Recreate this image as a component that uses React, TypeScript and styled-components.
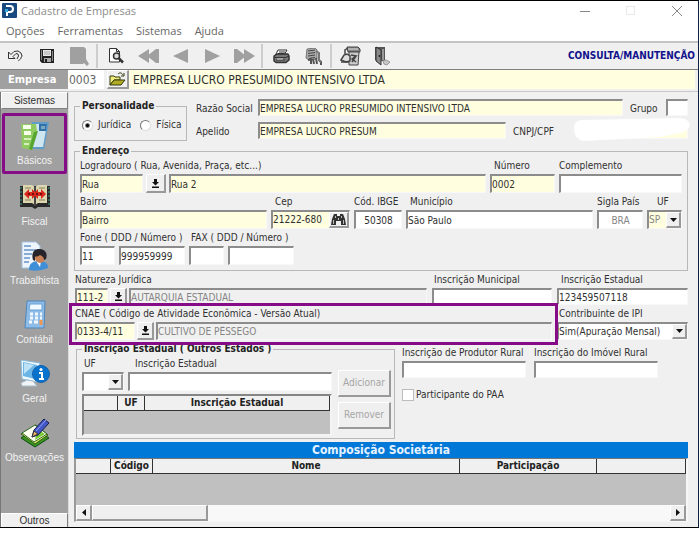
import React, { useId } from "react";
import styled, { createGlobalStyle, css } from "styled-components";

const ui = '"DejaVu Sans Condensed", "DejaVu Sans", sans-serif';
const purple = "#850c86";

const GlobalStyle = createGlobalStyle`
  * { box-sizing: border-box; }
  body { margin: 0; background: #fff; }
  body, input, button, select {
    font-family: ${ui};
    font-size: 10px;
    line-height: 14px;
    color: #303030;
  }
  button { padding: 0; margin: 0; cursor: pointer; }
`;

const Window = styled.div`
  display: flex;
  flex-direction: column;
  background: #f0f0f0;
  border-top: 1px solid #000;
  border-right: 1px solid #0c2340;
  border-bottom: 1px solid #000;
`;

const TitleBar = styled.header`
  display: flex;
  align-items: center;
  gap: 4px;
  height: 19px;
  padding-left: 2px;
  background: #fff;
`;

const Title = styled.h1`
  flex: 1;
  margin: 0;
  font-family: "Open Sans", sans-serif;
  font-size: 11px;
  font-weight: 400;
  color: #8c8c8c;
`;

const WindowButton = styled.button`
  display: grid;
  place-items: center;
  width: 42px;
  height: 18px;
  border: 0;
  background: none;
`;

const MenuBar = styled.nav`
  display: flex;
  gap: 13px;
  height: 21px;
  padding: 4px 6px 0;
  background: #fff;
`;

const MenuLink = styled.a`
  font-family: "Open Sans", sans-serif;
  font-size: 11px;
  color: #666;
  text-decoration: none;
`;

const ToolBar = styled.div`
  display: flex;
  align-items: center;
  gap: 2px;
  height: 29px;
  padding-right: 3px;
  border-top: 2px solid #c4c4c4;
  border-bottom: 1px solid #808080;
`;

const ToolButton = styled.button`
  display: grid;
  place-items: center;
  width: 30px;
  height: 24px;
  border: 0;
  background: none;
`;

const Separator = styled.span`
  width: 2px;
  height: 24px;
  margin-right: 1px;
  background: #cdcdcd;
`;

const Mode = styled.strong`
  margin-left: auto;
  color: #12128c;
`;

const CompanyRow = styled.div`
  display: flex;
  align-items: stretch;
  height: 19px;
  padding-right: 3px;
  margin-bottom: 2px;
`;

const CompanyLabel = styled.label`
  width: 68px;
  padding-left: 8px;
  background: #a0a0a0;
  color: #fff;
  font-size: 11px;
  font-weight: 700;
  line-height: 19px;
`;

const CompanyInput = styled.input<{ $wide?: boolean }>`
  width: 36px;
  margin-right: 3px;
  padding: 0 1px;
  border: 0;
  background: #fff;
  font-size: 12px;
  color: #666;
  ${(p) =>
    p.$wide &&
    css`
      flex: 1;
      margin: 0;
      padding: 0 4px;
      background: #ffffdf;
      color: #303030;
    `}
`;

const Body = styled.div`
  display: flex;
  border-top: 1px solid #c8c8c8;
`;

const SideBar = styled.aside`
  display: flex;
  flex-direction: column;
  width: 69px;
  flex: none;
  background: #a0a0a0;
  border-left: 1px solid #777;
  border-right: 1px solid #ddd;
`;

const SideTab = styled.button<{ $end?: boolean }>`
  height: 17px;
  border: 1px solid;
  border-color: #fff #808080 #808080 #fff;
  background: #f0f0f0;
  font-family: "Liberation Sans", sans-serif;
  font-size: 10px;
  ${(p) =>
    p.$end &&
    css`
      height: 14px;
      margin-top: auto;
      border-bottom: 0;
    `}
`;

const SideItem = styled.button<{ $active?: boolean }>`
  display: flex;
  flex-direction: column;
  align-items: center;
  gap: 3px;
  height: 59px;
  border: 3px solid transparent;
  background: none;
  padding-top: 5px;
  font-family: "Liberation Sans", sans-serif;
  font-size: 10px;
  line-height: 14px;
  color: #f3f3f3;
  white-space: nowrap;
  ${(p) =>
    p.$active &&
    css`
      height: 61px;
      margin: 4px 1px 0;
      border: 3px solid ${purple};
      border-radius: 2px;
    `}
`;

const Content = styled.main`
  display: flex;
  flex-direction: column;
  flex: 1;
  min-width: 0;
  padding: 7px 10px 5px 5px;
`;

const Row = styled.div<{ $gap?: number }>`
  display: flex;
  align-items: flex-end;
  gap: ${(p) => p.$gap ?? 4}px;
`;

const TopRow = styled.div`
  display: flex;
  gap: 9px;
  margin-bottom: 3px;
`;

const TopFields = styled.div`
  display: flex;
  flex-direction: column;
  gap: 6px;
  flex: 1;
`;

const InlineRow = styled.div`
  display: flex;
  align-items: center;
`;

const InlineLabel = styled.label<{ $w: number; $indent?: number }>`
  width: ${(p) => p.$w}px;
  padding-left: ${(p) => p.$indent ?? 0}px;
  padding-top: 3px;
  height: 17px;
`;

const Group = styled.fieldset<{ $w?: number; $bottom?: number }>`
  min-width: 0;
  width: ${(p) => (p.$w ? `${p.$w}px` : "auto")};
  margin: 0;
  padding: 1px 5px ${(p) => p.$bottom ?? 5}px;
  border: 1px solid #b8b8b8;
  > legend {
    padding: 0 2px;
    font-weight: 700;
    line-height: 14px;
    color: #222;
  }
`;

const Stack = styled.div`
  display: flex;
  flex-direction: column;
  gap: 2px;
`;

const FieldBox = styled.div<{ $w?: number }>`
  display: flex;
  flex-direction: column;
  gap: 1px;
  min-width: 0;
  ${(p) => (p.$w ? `width: ${p.$w}px; flex: none;` : "flex: 1;")}
`;

const FieldLabel = styled.label<{ $indent?: number }>`
  padding-left: ${(p) => p.$indent ?? 0}px;
  white-space: nowrap;
`;

type Tone = "white" | "yellow" | "gray";
const fills: Record<Tone, string> = { white: "#fff", yellow: "#ffffdf", gray: "#f0f0f0" };

const sunken = css`
  border: solid;
  border-width: 2px 1px 1px 2px;
  border-color: #8c8c8c #f8f8f8 #f8f8f8 #8c8c8c;
`;

const raised = css`
  border: solid;
  border-width: 1px 2px 2px 1px;
  border-color: #fff #999 #999 #fff;
  background: #efefef;
`;

const TextInput = styled.input<{ $w?: number; $h?: number; $tone?: Tone; $muted?: boolean; $center?: boolean }>`
  ${sunken}
  ${(p) => (p.$w ? `width: ${p.$w}px; flex: none;` : "width: 100%; flex: 1 1 0;")}
  min-width: 0;
  height: ${(p) => p.$h ?? 19}px;
  padding: 0;
  border-radius: 0;
  background: ${(p) => fills[p.$tone ?? "white"]};
  color: ${(p) => (p.$muted ? "#858585" : "#303030")};
  text-align: ${(p) => (p.$center ? "center" : "left")};
  outline: none;
`;

const ColumnInput = styled(TextInput)`
  flex: none;
`;

const PickButton = styled.button<{ $w?: number; $h?: number }>`
  ${raised}
  display: grid;
  place-items: center;
  flex: none;
  width: ${(p) => p.$w ?? 20}px;
  height: ${(p) => p.$h ?? 19}px;
`;

const SunkenBox = styled.div`
  ${sunken}
  display: flex;
  height: 19px;
`;

const BareInput = styled.input`
  flex: 1;
  min-width: 0;
  border: 0;
  padding: 0;
  background: #ffffdf;
`;

const SelectWrap = styled.div<{ $h?: number }>`
  position: relative;
  height: ${(p) => p.$h ?? 19}px;
  flex: none;
`;

const SelectBox = styled.select<{ $tone?: Tone; $muted?: boolean }>`
  ${sunken}
  appearance: none;
  width: 100%;
  height: 100%;
  padding: 0;
  border-radius: 0;
  background: ${(p) => fills[p.$tone ?? "white"]};
  color: ${(p) => (p.$muted ? "#858585" : "#303030")};
  outline: none;
`;

const SelectArrow = styled.span`
  ${raised}
  position: absolute;
  top: 2px;
  right: 1px;
  bottom: 1px;
  display: grid;
  place-items: center;
  width: 15px;
  pointer-events: none;
`;

const RadioLabel = styled.label`
  display: flex;
  align-items: center;
  gap: 5px;
`;

const Radio = styled.input`
  appearance: none;
  width: 11px;
  height: 11px;
  margin: 0;
  border: 1px solid;
  border-color: #777 #ddd #ddd #777;
  border-radius: 50%;
  background: #fff;
  &:checked {
    background: radial-gradient(circle, #000 0 1px, #fff 3px);
  }
`;

const RadioRow = styled.div`
  display: flex;
  gap: 9px;
  padding: 4px 2px 3px;
`;

const HiddenValue = styled.div`
  position: relative;
  flex: 1;
  display: flex;
  svg {
    position: absolute;
    left: -4px;
    top: -4px;
    width: calc(100% + 6px);
    height: 24px;
  }
`;

const Highlight = styled.div`
  position: relative;
  flex: 1;
  min-width: 0;
  &::after {
    content: "";
    position: absolute;
    inset: -4px -6px -5px;
    border: 3px solid ${purple};
    pointer-events: none;
    z-index: 1;
  }
`;

const FormRow = styled.div`
  display: flex;
  gap: 5px;
  margin-top: 2px;
  padding-left: 1px;
`;

const LowerRow = styled.div`
  display: flex;
  align-items: flex-start;
  gap: 7px;
  margin-top: 2px;
  padding-left: 2px;
`;

const StatesLayout = styled.div`
  display: grid;
  grid-template-columns: 250px 53px;
  gap: 6px;
`;

const StatesActions = styled.div`
  display: flex;
  flex-direction: column;
  gap: 5px;
  padding-top: 13px;
`;

const ActionButton = styled.button`
  ${raised}
  height: 27px;
  color: #a6a6a6;
`;

const GridFrame = styled.div`
  height: 42px;
  margin-top: 3px;
  border: 2px solid;
  border-color: #858585 #f4f4f4 #f4f4f4 #858585;
  background: #c0c0c0;
`;

const Table = styled.table`
  width: 100%;
  table-layout: fixed;
  border-collapse: separate;
  border-spacing: 0;
  th {
    height: 15px;
    padding: 0;
    border-right: 1px solid #333;
    border-bottom: 1px solid #333;
    background: #f0f0f0;
    line-height: 14px;
    color: #222;
    white-space: nowrap;
  }
`;

const Col = styled.col<{ $w?: number }>`
  ${(p) => p.$w && `width: ${p.$w}px;`}
`;

const RuralFields = styled.div`
  display: flex;
  flex-direction: column;
  gap: 10px;
  padding-top: 4px;
`;

const CheckLabel = styled.label`
  display: flex;
  align-items: center;
  gap: 2px;
`;

const Check = styled.input`
  appearance: none;
  width: 12px;
  height: 12px;
  margin: 0;
  border: 1px solid #bbb;
  background: #fff;
  &:checked { background: #444; }
`;

const Banner = styled.h2`
  margin: 3px 0 0;
  height: 16px;
  background: #0078d7;
  color: #e6f3ff;
  font-size: 12px;
  line-height: 16px;
  font-weight: 700;
  text-align: center;
`;

const PartnerFrame = styled.div`
  border: solid;
  border-width: 1px 2px 1px 2px;
  border-color: #777 #f6f6f6 #f6f6f6 #999;
  background: #c0c0c0;
`;

const EmptyRows = styled.div`
  height: 31px;
`;

const ScrollBar = styled.div`
  display: flex;
  height: 16px;
  background: #f8f8f8;
`;

const Thumb = styled.span`
  ${raised}
  width: 116px;
  margin-right: auto;
`;

function Down() {
  return (
    <svg width="7" height="4" viewBox="0 0 7 4"><path d="M0 0h7L3.500 4z" fill="#111" /></svg>
  );
}

function PickIcon() {
  return (
    <svg width="9" height="9" viewBox="0 0 9 9"><path d="M3 0h3v3h2L4.500 6.500 1 3h2zM1 7.500h7V9H1z" fill="#111" /></svg>
  );
}

type FieldProps = {
  label: string; value?: string; w?: number; h?: number; tone?: Tone; muted?: boolean; center?: boolean; indent?: number;
};

function Field({ label, value = "", w, h, tone, muted, center, indent }: FieldProps) {
  const id = useId();
  return (
    <FieldBox $w={w}>
      <FieldLabel htmlFor={id} $indent={indent}>{label}</FieldLabel>
      <ColumnInput id={id} defaultValue={value} $h={h} $tone={tone} $muted={muted} $center={center} />
    </FieldBox>
  );
}

function Select({ id, value, h, tone, muted }: { id: string; value: string; h?: number; tone?: Tone; muted?: boolean }) {
  return (
    <SelectWrap $h={h}>
      <SelectBox id={id} defaultValue={value} $tone={tone} $muted={muted}><option>{value}</option></SelectBox>
      <SelectArrow><Down /></SelectArrow>
    </SelectWrap>
  );
}

const toolIcons = {
  undo: (
    <svg width="16" height="12" viewBox="0 0 16 12" fill="none" stroke="#333">
      <path d="M1.500 2v6.500H8L6 6.500l3-3 2 .5.500 2-1.500 3M1.500 2L4 4.500l3-3L11 1l3 2 1 3-1.500 3-2.500 2" />
      <path d="M11 11l3-3 1-3" stroke="#777" />
    </svg>
  ),
  save: (
    <svg width="14" height="14" viewBox="0 0 14 14">
      <path d="M0 0h14v14H2l-2-2z" fill="#222" /><path d="M3 1h8v6H3z" fill="#e8e8e8" />
      <path d="M1.500 1v10M12.500 2v10" stroke="#888" />
      <path d="M4 9h7v4H4z" fill="#aaa" /><path d="M5 10h2v3H5z" fill="#222" /><path d="M4 3h6M4 5h6" stroke="#aaa" />
    </svg>
  ),
  page: (
    <svg width="19" height="19" viewBox="0 0 19 19"><path d="M0 0h14l2 2v10l3 5-2 2-3-3-1 1H0z" fill="#a0a0a0" /></svg>
  ),
  preview: (
    <svg width="16" height="16" viewBox="0 0 16 16" fill="none" stroke="#333">
      <path d="M1.500.5h7l3 3v10.500h-10zM8.500.5v3h3" fill="#fff" />
      <circle cx="8.500" cy="8" r="3" fill="#ddd" strokeWidth="1.500" /><path d="M11 10.500l4 4" strokeWidth="2.500" />
    </svg>
  ),
  first: (
    <svg width="21" height="14" viewBox="0 0 21 14" fill="#a0a0a0"><path d="M0 7L11 0v14zM9 7l9-7h3v14h-3z" /></svg>
  ),
  prev: <svg width="15" height="14" viewBox="0 0 15 14" fill="#a0a0a0"><path d="M0 7L15 0v14z" /></svg>,
  next: <svg width="15" height="14" viewBox="0 0 15 14" fill="#a0a0a0"><path d="M15 7L0 0v14z" /></svg>,
  last: (
    <svg width="21" height="14" viewBox="0 0 21 14" fill="#a0a0a0"><path d="M21 7L10 0v14zM12 7L3 0H0v14h3z" /></svg>
  ),
  print: (
    <svg width="17" height="15" viewBox="0 0 17 15" stroke="#333" strokeLinejoin="round">
      <path d="M5 1h9l-3 5H2.500z" fill="#fff" /><path d="M1 7l3-2h11l1 2v4l-3 2.500H3L1 12z" fill="#777" strokeWidth="1.500" />
      <path d="M6 3h6M5 4.500h6M1.500 8.500h11M3 11h9M12.500 8.500L16 7" fill="none" /><path d="M4 10h6" stroke="#ddd" />
    </svg>
  ),
  server: (
    <svg width="18" height="17" viewBox="0 0 18 17" fill="none" stroke="#444">
      <path d="M3 1l8-1 2 2v9l-8 1-3-2z" fill="#aaa" stroke="#777" /><path d="M4 3l7-1M4 5.500l7-1M4 8l7-1M5 10.500l6-1" stroke="#444" />
      <path d="M4 12l3-1v5M9 11l1 5M12 10l1 6M15 12l2 2v3" strokeWidth="2" stroke="#555" /><path d="M12 3l3 2v7l2 2" stroke="#777" strokeWidth="2" />
    </svg>
  ),
  calculator: (
    <svg width="21" height="20" viewBox="0 0 21 20" fill="none" stroke="#444">
      <path d="M7 1h11l2 2v3H8z" fill="#888" /><path d="M9 6h10l-1 13H9z" fill="#ccc" />
      <path d="M1 14l3-5 3-1 3 2v5l-4 1z" fill="#ddd" strokeWidth="1.500" /><path d="M5 8V4l3-2M1 16h8" strokeWidth="1.500" />
      <path d="M11 9l5 1-4 3 4 3M12 16l4-6" strokeWidth="1.500" /><path d="M8 3h10" stroke="#ddd" />
    </svg>
  ),
  exit: (
    <svg width="18" height="20" viewBox="0 0 18 20">
      <path d="M2 1h10v14H9L2 14z" fill="#555" /><path d="M3 1l5 3v15l-5-4z" fill="#888" stroke="#333" />
      <path d="M9 3h2v11H9z" fill="#999" /><circle cx="6.500" cy="10" r="1" fill="#222" />
      <path d="M10 15l3-1 4 2-3 3-3-1z" fill="#c6c6c6" stroke="#999" />
    </svg>
  ),
};

function Basics() {
  return (
    <svg width="30" height="30" viewBox="0 0 30 30">
      <path d="M12 1h17l-5 27H9z" fill="#5f9cc6" /><path d="M15 3h12l-4 23H11z" fill="#cfe6f0" /><path d="M19 3h8l-1 7h-7z" fill="#306fa8" />
      <path d="M21 5h4v3h-4z" fill="#79aac0" />
      <path d="M1 3h15l1 7-5 19-10-2z" fill="#8fcb60" /><path d="M3 6h8M4 12h7" stroke="#f5ffe9" strokeWidth="4" />
      <path d="M4 18h7M4 23h5" stroke="#d5efbd" strokeWidth="2" /><path d="M14 11l4-1-6 19-3-1z" fill="#57a52f" />
    </svg>
  );
}

function Fiscal() {
  return (
    <svg width="30" height="30" viewBox="0 0 30 30">
      <path d="M0 4h30v21H18l-3 2-3-2H0z" fill="#292929" /><path d="M3 3h9l3 2v18l-3-2H3zM18 3h9v18h-9l-3 2V5z" fill="#dcd6b1" />
      <path d="M5 6h6M5 18h6M19 6h6M19 18h6" stroke="#88805d" /><path d="M14 4h2v20h-2z" fill="#444" />
      <path d="M4 12l5-5v3h3V7l3 3 3-3v3h3V7l5 5-5 5v-3h-3v3l-3-3-3 3v-3H9v3z" fill="#d9271b" /><path d="M8 12h14" stroke="#701010" strokeWidth="2" strokeDasharray="2 2" />
      <path d="M1 5v18M29 5v18" stroke="#3ca087" strokeDasharray="2 2" />
    </svg>
  );
}

function Workers() {
  return (
    <svg width="30" height="30" viewBox="0 0 30 30">
      <path d="M2 1h14l4 4v22H2z" fill="#eef5fc" stroke="#a3c3e2" /><path d="M4 5h7M4 9h12M4 13h8M4 17h6M4 21h5" stroke="#6694c8" strokeWidth="1.500" />
      <path d="M9 29c0-7 4-9 10-9s9 2 9 7q-9 4-19 2z" fill="#3f8fd8" /><path d="M16 20h5l-1 6z" fill="#fff" />
      <ellipse cx="20" cy="17" rx="5" ry="5" fill="#c98054" /><path d="M13 19c-2-7 1-11 6-11 6 0 9 4 7 10l-2 1c0-3-2-4-4-5-2 2-4 1-5 2v4z" fill="#27242b" />
    </svg>
  );
}

function Accounting() {
  return (
    <svg width="30" height="30" viewBox="0 0 30 30">
      <path d="M7 1h18l-1 27H5z" fill="#8ebce6" stroke="#4d86bd" /><path d="M10 4h12v6H9z" fill="#f1faff" stroke="#69a2d5" />
      <path d="M10 14h3M15 14h3M20 14h2M10 18h3M15 18h3M20 18h2M9 22h3M14 22h4M20 22h2" stroke="#f2f8ff" strokeWidth="3" />
      <path d="M21 20v5" stroke="#ef9653" strokeWidth="3" />
    </svg>
  );
}

function General() {
  return (
    <svg width="30" height="30" viewBox="0 0 30 30">
      <path d="M1 1l19 3-3 19-15-3z" fill="#edf8ff" stroke="#8bbad9" /><path d="M3 3l14 3-2 14-12-3z" fill="#69b5e5" /><path d="M4 4l10 2-10 9z" fill="#bde2f5" />
      <path d="M7 21l6 1 4 5H2l-1-3z" fill="#f1f5f7" stroke="#a8bdcc" /><circle cx="21" cy="15" r="8.500" fill="#0872cc" stroke="#1663ad" />
      <circle cx="21" cy="10.500" r="1.500" fill="#fff" /><path d="M19 14h3v6m-3 0h5" stroke="#fff" strokeWidth="2" fill="none" />
    </svg>
  );
}

function Notes() {
  return (
    <svg width="30" height="30" viewBox="0 0 30 30">
      <path d="M1 20l14-9 14 9-14 9z" fill="#36941f" stroke="#124c15" /><path d="M1 16l15-9 12 10-13 9z" fill="#dceb61" stroke="#315d17" />
      <path d="M2 15l13-8 12 9-13 8z" fill="#fcfff0" stroke="#2c6825" /><path d="M17 11l8 5-10 6z" fill="#79c936" />
      <path d="M12 19l2-7L24 1l5 4-11 12z" fill="#4256c6" stroke="#171b55" /><path d="M12 19l2-6 4 3z" fill="#ecb66c" stroke="#333" /><path d="M16 13L26 2" stroke="#8fa3ff" />
    </svg>
  );
}

const modules = [
  { name: "Básicos", Icon: Basics },
  { name: "Fiscal", Icon: Fiscal },
  { name: "Trabalhista", Icon: Workers },
  { name: "Contábil", Icon: Accounting },
  { name: "Geral", Icon: General },
  { name: "Observações", Icon: Notes },
];

function FolderIcon() {
  return (
    <svg width="17" height="14" viewBox="0 0 17 14" stroke="#333a10" strokeLinejoin="round">
      <path d="M1 4h4l1 1h5v3H5l-4 5z" fill="#f2ed78" /><path d="M5 8h11l-4 5H1z" fill="#b0ab22" />
      <path d="M9 2c2-2 4-1 5 1m1-2v3h-3" fill="none" />
    </svg>
  );
}

function Binoculars() {
  return (
    <svg width="15" height="12" viewBox="0 0 15 12" fill="#333">
      <path d="M3 0h3v2h3V0h3l2 5 1 6h-5V7H5v4H0l1-6z" /><path d="M2.500 6v4M4.500 2v2M10.500 2v2M12.500 6v4M7.500 4v2" stroke="#bbb" />
    </svg>
  );
}

export default function App() {
  return (
    <>
      <GlobalStyle />
      <Window>
        <TitleBar>
          <svg width="15" height="15" viewBox="0 0 15 15">
            <rect width="15" height="15" rx="1" fill="#184a80" />
            <path d="M4 3h4a3 3 0 010 6H6" fill="none" stroke="#fff" strokeWidth="2" /><path d="M3 6h3v3H3z" fill="#35a8e0" /><path d="M4 9h2v4H4z" fill="#fff" />
          </svg>
          <Title>Cadastro de Empresas</Title>
          <WindowButton aria-label="Minimizar"><svg width="10" height="10"><path d="M0 5.500h10" stroke="#888" /></svg></WindowButton>
          <WindowButton aria-label="Maximizar"><svg width="10" height="10"><rect x=".5" y=".5" width="8" height="8" fill="none" stroke="#e8e8e8" /></svg></WindowButton>
          <WindowButton aria-label="Fechar"><svg width="10" height="10"><path d="M0 0l10 10M10 0L0 10" stroke="#888" /></svg></WindowButton>
        </TitleBar>
        <MenuBar>
          {["Opções", "Ferramentas", "Sistemas", "Ajuda"].map((m) => <MenuLink key={m} href="#">{m}</MenuLink>)}
        </MenuBar>
        <ToolBar>
          <ToolButton aria-label="Desfazer">{toolIcons.undo}</ToolButton>
          <ToolButton aria-label="Salvar">{toolIcons.save}</ToolButton>
          <ToolButton aria-label="Excluir">{toolIcons.page}</ToolButton>
          <Separator />
          <ToolButton aria-label="Pesquisar">{toolIcons.preview}</ToolButton>
          <ToolButton aria-label="Primeiro">{toolIcons.first}</ToolButton>
          <ToolButton aria-label="Anterior">{toolIcons.prev}</ToolButton>
          <ToolButton aria-label="Próximo">{toolIcons.next}</ToolButton>
          <ToolButton aria-label="Último">{toolIcons.last}</ToolButton>
          <Separator />
          <ToolButton aria-label="Imprimir">{toolIcons.print}</ToolButton>
          <ToolButton aria-label="Servidor">{toolIcons.server}</ToolButton>
          <Separator />
          <ToolButton aria-label="Calculadora">{toolIcons.calculator}</ToolButton>
          <ToolButton aria-label="Sair">{toolIcons.exit}</ToolButton>
          <Mode>CONSULTA/MANUTENÇÃO</Mode>
        </ToolBar>
        <CompanyRow>
          <CompanyLabel htmlFor="company">Empresa</CompanyLabel>
          <CompanyInput id="company" defaultValue="0003" />
          <PickButton $w={22} aria-label="Abrir empresa"><FolderIcon /></PickButton>
          <CompanyInput $wide aria-label="Nome da empresa" defaultValue="EMPRESA LUCRO PRESUMIDO INTENSIVO LTDA" />
        </CompanyRow>
        <Body>
          <SideBar>
            <SideTab>Sistemas</SideTab>
            {modules.map(({ name, Icon }, i) => (
              <SideItem key={name} $active={i === 0}><Icon />{name}</SideItem>
            ))}
            <SideTab $end>Outros</SideTab>
          </SideBar>
          <Content>
            <TopRow>
              <Group $w={113}>
                <legend>Personalidade</legend>
                <RadioRow>
                  <RadioLabel><Radio type="radio" name="kind" defaultChecked />Jurídica</RadioLabel>
                  <RadioLabel><Radio type="radio" name="kind" />Física</RadioLabel>
                </RadioRow>
              </Group>
              <TopFields>
                <InlineRow>
                  <InlineLabel htmlFor="name" $w={62}>Razão Social</InlineLabel>
                  <TextInput id="name" $h={17} $tone="yellow" defaultValue="EMPRESA LUCRO PRESUMIDO INTENSIVO LTDA" />
                  <InlineLabel htmlFor="group" $w={43} $indent={7}>Grupo</InlineLabel>
                  <TextInput id="group" $w={22} $h={17} />
                </InlineRow>
                <InlineRow>
                  <InlineLabel htmlFor="nick" $w={62}>Apelido</InlineLabel>
                  <TextInput id="nick" $w={248} $h={17} $tone="yellow" defaultValue="EMPRESA LUCRO PRESUM" />
                  <InlineLabel htmlFor="cnpj" $w={72} $indent={7}>CNPJ/CPF</InlineLabel>
                  <HiddenValue>
                    <TextInput id="cnpj" $h={17} $tone="yellow" />
                    <svg viewBox="0 0 116 24" preserveAspectRatio="none"><path d="M0 9q1-7 8-7l50-1 48-1q9 1 10 7-2 6-10 8l-20 4-76 4Q0 22 0 9z" fill="#fff" /></svg>
                  </HiddenValue>
                </InlineRow>
              </TopFields>
            </TopRow>
            <Group>
              <legend>Endereço</legend>
              <Stack>
                <Row>
                  <FieldBox>
                    <FieldLabel htmlFor="street">Logradouro ( Rua, Avenida, Praça, etc...)</FieldLabel>
                    <Row $gap={3}>
                      <TextInput $w={63} $tone="yellow" aria-label="Tipo de logradouro" defaultValue="Rua" />
                      <PickButton aria-label="Escolher tipo"><PickIcon /></PickButton>
                      <TextInput id="street" $tone="yellow" defaultValue="Rua 2" />
                    </Row>
                  </FieldBox>
                  <Field label="Número" value="0002" w={65} tone="yellow" indent={4} />
                  <Field label="Complemento" w={123} />
                </Row>
                <Row>
                  <Field label="Bairro" value="Bairro" tone="yellow" />
                  <FieldBox $w={79}>
                    <FieldLabel htmlFor="zip" $indent={4}>Cep</FieldLabel>
                    <SunkenBox>
                      <BareInput id="zip" defaultValue="21222-680" />
                      <PickButton $w={20} $h={16} aria-label="Buscar CEP"><Binoculars /></PickButton>
                    </SunkenBox>
                  </FieldBox>
                  <Field label="Cód. IBGE" value="50308" w={48} center />
                  <Field label="Município" value="São Paulo" indent={4} />
                  <Field label="Sigla País" value="BRA" w={46} muted center />
                  <FieldBox $w={35}>
                    <FieldLabel htmlFor="uf" $indent={10}>UF</FieldLabel>
                    <Select id="uf" value="SP" tone="yellow" muted />
                  </FieldBox>
                </Row>
                <Row>
                  <FieldBox $w={105}>
                    <FieldLabel htmlFor="phone">Fone ( DDD / Número )</FieldLabel>
                    <Row>
                      <TextInput $w={35} aria-label="DDD" defaultValue="11" />
                      <TextInput id="phone" defaultValue="999959999" />
                    </Row>
                  </FieldBox>
                  <FieldBox $w={105}>
                    <FieldLabel htmlFor="fax" $indent={2}>FAX ( DDD / Número )</FieldLabel>
                    <Row>
                      <TextInput $w={35} aria-label="DDD do fax" />
                      <TextInput id="fax" />
                    </Row>
                  </FieldBox>
                </Row>
              </Stack>
            </Group>
            <FormRow>
              <FieldBox>
                <FieldLabel htmlFor="nature">Natureza Jurídica</FieldLabel>
                <Row $gap={2}>
                  <TextInput id="nature" $w={33} $h={17} $tone="yellow" defaultValue="111-2" />
                  <PickButton $w={17} $h={17} aria-label="Escolher natureza"><PickIcon /></PickButton>
                  <TextInput $h={17} $tone="gray" $muted aria-label="Descrição da natureza" defaultValue="AUTARQUIA ESTADUAL" />
                </Row>
              </FieldBox>
              <Field label="Inscrição Municipal" w={120} h={17} indent={2} />
              <Field label="Inscrição Estadual" value="123459507118" w={131} h={17} indent={4} />
            </FormRow>
            <FormRow>
              <Highlight>
                <FieldBox>
                  <FieldLabel htmlFor="cnae">CNAE ( Código de Atividade Econômica - Versão Atual)</FieldLabel>
                  <Row $gap={2}>
                    <TextInput id="cnae" $w={60} $h={18} $tone="yellow" defaultValue="0133-4/11" />
                    <PickButton $w={17} $h={18} aria-label="Escolher CNAE"><PickIcon /></PickButton>
                    <TextInput $h={18} $tone="gray" $muted aria-label="Descrição do CNAE" defaultValue="CULTIVO DE PÊSSEGO" />
                  </Row>
                </FieldBox>
              </Highlight>
              <FieldBox $w={131}>
                <FieldLabel htmlFor="ipi" $indent={2}>Contribuinte de IPI</FieldLabel>
                <Select id="ipi" value="Sim(Apuração Mensal)" h={18} />
              </FieldBox>
            </FormRow>
            <LowerRow>
              <Group $w={319} $bottom={2}>
                <legend>Inscrição Estadual ( Outros Estados )</legend>
                <StatesLayout>
                  <div>
                    <Row>
                      <FieldBox $w={42}>
                        <FieldLabel htmlFor="state" $indent={2}>UF</FieldLabel>
                        <Select id="state" value="" />
                      </FieldBox>
                      <Field label="Inscrição Estadual" indent={7} />
                    </Row>
                    <GridFrame>
                      <Table>
                        <colgroup><Col $w={34} /><Col $w={27} /><Col /></colgroup>
                        <thead><tr><th /><th>UF</th><th>Inscrição Estadual</th></tr></thead>
                      </Table>
                    </GridFrame>
                  </div>
                  <StatesActions>
                    <ActionButton>Adicionar</ActionButton>
                    <ActionButton>Remover</ActionButton>
                  </StatesActions>
                </StatesLayout>
              </Group>
              <RuralFields>
                <Row $gap={8}>
                  <Field label="Inscrição de Produtor Rural" w={124} h={17} />
                  <Field label="Inscrição do Imóvel Rural" w={124} h={17} />
                </Row>
                <CheckLabel><Check type="checkbox" />Participante do PAA</CheckLabel>
              </RuralFields>
            </LowerRow>
            <Banner>Composição Societária</Banner>
            <PartnerFrame>
              <Table>
                <colgroup><Col $w={35} /><Col $w={42} /><Col /><Col $w={137} /><Col $w={89} /></colgroup>
                <thead><tr><th /><th>Código</th><th>Nome</th><th>Participação</th><th /></tr></thead>
              </Table>
              <EmptyRows />
              <ScrollBar>
                <PickButton $w={16} $h={16} aria-label="Rolar para a esquerda"><svg width="4" height="7"><path d="M4 0v7L0 3.500z" fill="#111" /></svg></PickButton>
                <Thumb />
                <PickButton $w={16} $h={16} aria-label="Rolar para a direita"><svg width="4" height="7"><path d="M0 0v7L4 3.500z" fill="#111" /></svg></PickButton>
              </ScrollBar>
            </PartnerFrame>
          </Content>
        </Body>
      </Window>
    </>
  );
}
